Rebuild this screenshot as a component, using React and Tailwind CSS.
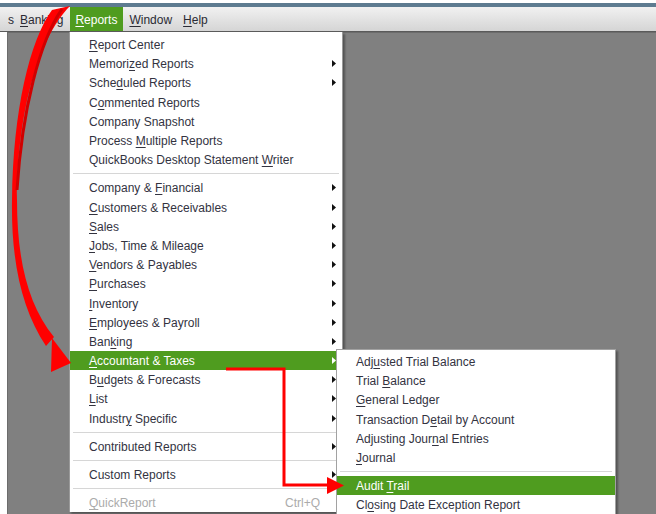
import React from 'react';

const MAIN = [
  [
    { t: '_Report Center' },
    { t: 'Memori_zed Reports', sub: true },
    { t: 'Sche_duled Reports', sub: true },
    { t: 'C_ommented Reports' },
    { t: 'Company Snapshot' },
    { t: 'Process _Multiple Reports' },
    { t: 'QuickBooks Desktop Statement _Writer' },
  ],
  [
    { t: 'Company & _Financial', sub: true },
    { t: '_Customers & Receivables', sub: true },
    { t: '_Sales', sub: true },
    { t: '_Jobs, Time & Mileage', sub: true },
    { t: '_Vendors & Payables', sub: true },
    { t: '_Purchases', sub: true },
    { t: '_Inventory', sub: true },
    { t: '_Employees & Payroll', sub: true },
    { t: 'Ban_king', sub: true },
    { t: '_Accountant & Taxes', sub: true, active: true },
    { t: 'B_udgets & Forecasts', sub: true },
    { t: '_List', sub: true },
    { t: 'Industr_y Specific', sub: true },
  ],
  [{ t: 'Contributed Reports', sub: true }],
  [{ t: 'Custom Reports', sub: true }],
  [{ t: '_QuickReport', disabled: true, key: 'Ctrl+Q' }],
];

const SUB = [
  [
    { t: 'Adj_usted Trial Balance' },
    { t: 'Trial _Balance' },
    { t: '_General Ledger' },
    { t: 'Transaction D_etail by Account' },
    { t: 'Adjusting Jour_nal Entries' },
    { t: '_Journal' },
  ],
  [{ t: 'Audit _Trail', active: true }, { t: 'Cl_osing Date Exception Report' }],
];

// "_" marks the underlined access key
const Label = ({ text }) => {
  const i = text.indexOf('_');
  if (i < 0) return <span>{text}</span>;
  return (
    <span>
      {text.slice(0, i)}
      <span className="underline underline-offset-2">{text[i + 1]}</span>
      {text.slice(i + 2)}
    </span>
  );
};

const Caret = ({ white }) => (
  <svg width="4" height="7" viewBox="0 0 4 7" className="shrink-0">
    <path d="M0 0 L4 3.5 L0 7 Z" fill={white ? '#ffffff' : '#111111'} />
  </svg>
);

const Row = ({ item }) => (
  <div
    className={
      'flex h-[19.2px] items-center justify-between pl-[19px] pr-[6px] ' +
      (item.active ? 'bg-[#4f9c1f] text-white' : item.disabled ? 'text-[#ababab]' : 'text-[#33333f]')
    }
  >
    <span className="pt-[1px]">
      <Label text={item.t} />
    </span>
    {item.sub && <Caret white={item.active} />}
    {item.key && <span className="mr-[16px] pt-[1px] text-[#ababab]">{item.key}</span>}
  </div>
);

const Sep = () => (
  <div className="flex h-[9px] items-center px-[3px]">
    <div className="h-px w-full bg-[#d6d6d6]" />
  </div>
);

const Menu = ({ groups }) =>
  groups.map((g, gi) => (
    <div key={gi}>
      {gi > 0 && <Sep />}
      {g.map((it) => (
        <Row key={it.t} item={it} />
      ))}
    </div>
  ));

export default function App() {
  return (
    <div
      className="relative h-[514px] w-[656px] overflow-hidden bg-white text-[12px] leading-none"
      style={{ fontFamily: '"Liberation Sans", Arial, sans-serif' }}
    >
      <div className="flex h-full flex-col">
        <div className="h-[3px] bg-white" />
        <div className="h-[4px] bg-[#5d7b90]" />
        {/* menu bar */}
        <div className="flex h-[25px] items-stretch border-b border-[#5a5a5a] bg-gradient-to-b from-[#f1f1f1] to-[#d5d5d5] pl-[8px] pt-[1px] text-[#2a2a33]">
          <span className="flex items-center">s</span>
          <span className="ml-[6px] flex items-center">
            <Label text="_Banking" />
          </span>
          <span className="ml-[7px] -mt-[1px] flex items-center bg-[#4f9c1f] pl-[5px] pr-[6px] pt-[1px] text-white">
            <Label text="_Reports" />
          </span>
          <span className="ml-[6px] flex items-center">
            <Label text="_Window" />
          </span>
          <span className="ml-[11px] flex items-center">
            <Label text="_Help" />
          </span>
        </div>
        <div className="flex flex-1">
          <div className="w-[7px] bg-white" />
          <div className="flex-1 border-t border-l border-[#6c6c6c] bg-[#808080]" />
        </div>
      </div>

      {/* Reports dropdown */}
      <div className="absolute left-[69px] top-[32px] w-[274px] border-l border-r border-[#9a9a9a] bg-white pt-[3px] shadow-[2px_2px_2px_rgba(0,0,0,0.35)]">
        <Menu groups={MAIN} />
      </div>

      {/* Accountant & Taxes submenu */}
      <div className="absolute left-[336px] top-[349px] w-[280px] border border-[#a2a2a2] bg-white pt-[2px] shadow-[2px_2px_2px_rgba(0,0,0,0.35)]">
        <Menu groups={SUB} />
      </div>

      {/* red annotation arrows */}
      <svg className="pointer-events-none absolute left-0 top-0" width="656" height="514" viewBox="0 0 656 514">
        <path
          d="M52 10 C30 40 13 110 12 200 C11 262 22 310 46 346 L54 337 C28 305 17 260 17 200 C17 120 36 40 70 6 Z"
          fill="#ff0000"
        />
        <path d="M62 9 C40 40 22 110 17 190" stroke="#d00000" strokeWidth="3" fill="none" />
        <path d="M52 338 L51 372 L71 363 Z" fill="#ff0000" />
        <polyline
          points="226,369 284,369 284,485 330,485"
          stroke="#ff0000"
          strokeWidth="3"
          fill="none"
          strokeLinejoin="miter"
        />
        <path d="M327 477 L344 485.5 L327 494 Z" fill="#ff0000" />
      </svg>
    </div>
  );
}
